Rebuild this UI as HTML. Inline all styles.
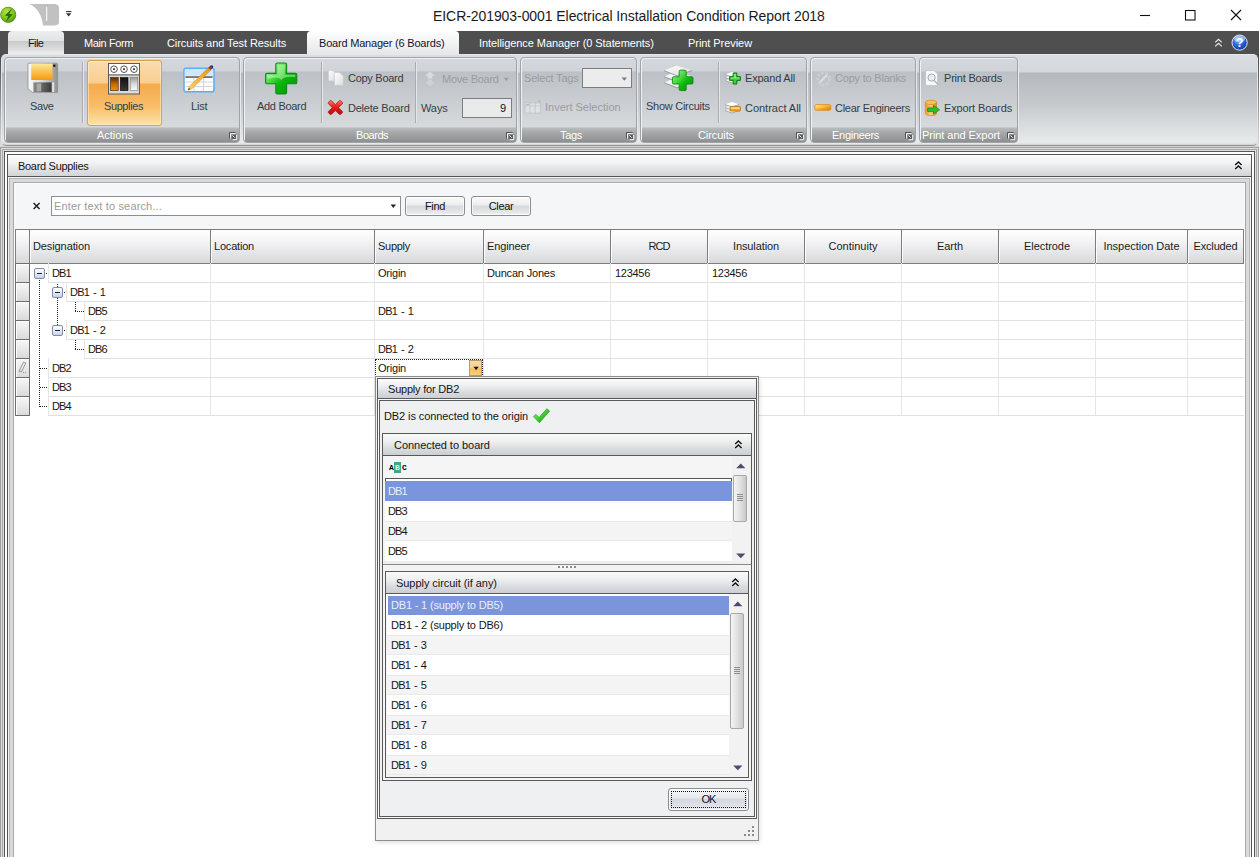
<!DOCTYPE html>
<html lang="en">
<head>
<meta charset="utf-8">
<title>EICR-201903-0001 Electrical Installation Condition Report 2018</title>
<style>
*{box-sizing:border-box;margin:0;padding:0}
html,body{width:1259px;height:857px;overflow:hidden;background:#fff}
body{font-family:"Liberation Sans",sans-serif;font-size:11px;color:#1e1e1e;position:relative}
.a{position:absolute}
.t{position:absolute;white-space:nowrap;line-height:14px;height:14px}
/* title */
#title{left:0;top:0;width:1259px;height:31px;background:#fff}
#ttext{left:433px;top:7px;font-size:14px;line-height:18px;height:18px;color:#1a1a1a;letter-spacing:-0.07px}
/* tab bar */
#tabbar{left:0;top:31px;width:1259px;height:23px;background:#4f4f4f}
.tab{position:absolute;top:5px;color:#fff;white-space:nowrap;line-height:14px}
/* ribbon */
#ribbonbg{left:0;top:54px;width:1259px;height:92px;background:linear-gradient(#45474a 0,#5e6165 20%,#8d9195 50%,#c2c6c7 85%,#dadede 100%)}
#ribbon{left:1px;top:54px;width:1257px;height:92px;border:1px solid #e4e8eb;border-bottom-color:#8e9292;border-radius:5px;box-shadow:inset 0 -2px 2px -1px rgba(60,70,70,.18);
 background:linear-gradient(#d9dce0 0,#d5d8dc 17px,#b4b9c0 18px,#c6cacd 50px,#e9eded 90px)}
.grp{position:absolute;top:57px;height:86px;border:1px solid #9fa4aa;border-radius:4px;
 background:linear-gradient(#d4d7db 0,#d0d3d8 13px,#bcc1c7 14px,#c8ccd0 40px,#d7dadc 68.5px,#b6b9b9 70.5px,#a5a7a8 75px,#8d8f90 84px);
 box-shadow:inset 1px 1px 0 #eef1f4,1px 1px 0 #e6e9ec}
.cap{position:absolute;top:128px;color:#fff;white-space:nowrap;line-height:14px;text-align:center}
.sep{position:absolute;top:62px;height:61px;width:2px;border-left:1px solid #a9adb2;border-right:1px solid #e4e6e8}
.rt{position:absolute;white-space:nowrap;line-height:14px;color:#353c45}
.dis{color:#9a9da1}
.dl{position:absolute;top:132px;width:9px;height:9px}

/* panel */
#pbg{left:0;top:146px;width:1259px;height:711px;background:#d2d6d6}
#outer{left:4px;top:151px;width:1251px;height:720px;border:1px solid #565656;background:#fff}
#grpb{left:7px;top:154px;width:1245px;height:720px;border:1px solid #565656;background:#f2f2f2}
#mid{left:9px;top:178px;width:1241px;height:720px;border:1px solid #b8b8b8;background:#d7d9db}
#pcap{left:8px;top:155px;width:1243px;height:22px;border-bottom:1px solid #565656;background:linear-gradient(#fefefe 0,#f1f2f3 8px,#dfe1e3 15px,#d2d5d8 21px)}
#inner{left:13px;top:182px;width:1233px;height:700px;border:1px solid #a9a9a9;background:#f4f6f8;box-shadow:inset 1px 1px 0 #fcfcfc}
.btn{position:absolute;height:20px;border:1px solid #8b8d90;border-radius:3px;text-align:center;line-height:18px;color:#111;
 background:linear-gradient(#fbfbfb 0,#ececed 8px,#d6d9dc 9px,#e4e6e8 15px,#f0f1f2 18px);box-shadow:inset 0 0 0 1px rgba(255,255,255,.7)}
/* grid */
#grid{left:14px;top:229px;width:1231px;height:640px;background:#fff}
#ghead{left:15px;top:229px;width:1229px;height:35px;background:linear-gradient(#ffffff 0,#f3f3f4 12px,#e3e4e6 24px,#d6d8da 33px);border:1px solid #7d7d7d}
.hc{position:absolute;top:230px;height:33px;border-left:1px solid #7d7d7d;box-shadow:inset 1px 0 0 #fbfbfb;line-height:32px;white-space:nowrap;color:#1c1c1c}
.hl{padding-left:3px}
.hcn{text-align:center}
.ind{position:absolute;left:15px;width:15px;height:20px;border:1px solid #6e6e6e;background:linear-gradient(#f7f7f7,#e9e9ea 50%,#d9dadc);box-shadow:inset 1px 1px 0 #fdfdfd}
.row{position:absolute;height:1px;background:#e0e0e0}
.vl{position:absolute;width:1px;background:#e6e6e6}
.ct{position:absolute;white-space:nowrap;line-height:14px;color:#151515}
.exp{position:absolute;width:11px;height:11px;border:1px solid #7f8ba8;border-radius:2px;background:linear-gradient(#ffffff,#dfe6f4 60%,#c6d2ea)}
.exp:after{content:"";position:absolute;left:2px;top:4px;width:5px;height:1px;background:#222}
.dv{position:absolute;width:1px;background-image:linear-gradient(#222 50%,transparent 50%);background-size:1px 2px}
.dh{position:absolute;height:1px;background-image:linear-gradient(90deg,#222 50%,transparent 50%);background-size:2px 1px}

/* popup */
#pop{left:375px;top:376px;width:384px;height:465px;border:1px solid #8e8e8e;background:#f1f1f2;box-shadow:1px 2px 4px rgba(0,0,0,.12)}
.gcap{position:absolute;background:linear-gradient(#fbfbfb 0,#eeeff0 35%,#d9dcdf 70%,#cbced2 100%)}
.dk{border:1px solid #595959}
.lr{position:absolute;height:20px}
.sel{background:#7a95dc}
.thumb{position:absolute;width:14px;border:1px solid #a8a8a8;border-radius:2px;background:linear-gradient(90deg,#f4f4f4 0,#e2e2e2 50%,#c9c9c9 100%)}
</style>
</head>
<body>
<!-- ===== title bar ===== -->
<div id="title" class="a"></div>
<div id="ttext" class="t">EICR-201903-0001 Electrical Installation Condition Report 2018</div>
<!-- app icon -->
<svg class="a" style="left:0;top:6px" width="18" height="18" viewBox="0 0 18 18">
<defs><radialGradient id="gi" cx="0.4" cy="0.3" r="0.8"><stop offset="0" stop-color="#b6e23a"/><stop offset="0.6" stop-color="#7cc11a"/><stop offset="1" stop-color="#3f8a12"/></radialGradient></defs>
<circle cx="8.2" cy="8.8" r="7.6" fill="url(#gi)" stroke="#4d8a1c" stroke-width="0.8"/>
<path d="M12.4 2 L5 9.6 L8.2 10.2 L6 15.8 L12.6 8.4 L9.2 7.8 Z" fill="#2d6a12"/>
</svg>
<!-- quick access shape -->
<svg class="a" style="left:28px;top:3px" width="33" height="24" viewBox="0 0 33 24">
<path d="M1 1 L27 1 Q31 1.4 31 5 L31 19 Q31 22 27 22.5 L15 22.5 C14 12 9 4 1 1 Z" fill="#c1c1c1"/>
<rect x="18" y="4" width="1.3" height="14" fill="#f2f2f2"/>
</svg>
<svg class="a" style="left:65px;top:10px" width="8" height="8" viewBox="0 0 8 8"><rect x="1" y="1" width="5.4" height="1.1" fill="#333"/><path d="M1 3.2 L6.4 3.2 L3.7 6.6 Z" fill="#333"/></svg>
<!-- window buttons -->
<svg class="a" style="left:1135px;top:5px" width="115" height="20" viewBox="0 0 115 20" fill="none" stroke="#111" stroke-width="1.1">
<path d="M5 10.5 H15"/><rect x="50.5" y="5.5" width="9.5" height="9.5"/><path d="M96 5 L106 15 M106 5 L96 15"/></svg>

<!-- ===== tab bar ===== -->
<div id="tabbar" class="a">
<div class="a" style="left:8px;top:0;width:56px;height:23px;border-radius:4px 4px 0 0;background:linear-gradient(#eceef0 0,#e1e3e5 10px,#c9cacb 10.5px,#dcdcdc 18px,#ededed 23px)"></div>
<div class="tab" style="left:28px;color:#15152e;letter-spacing:-0.6px">File</div>
<div class="tab" style="left:84px;letter-spacing:-0.4px">Main Form</div>
<div class="tab" style="left:167px;letter-spacing:-0.07px">Circuits and Test Results</div>
<div class="a" style="left:307px;top:0;width:152px;height:23px;border-radius:4px 4px 0 0;background:linear-gradient(#fefefe 0,#f2f3f4 12px,#e4e6e9 23px)"></div>
<div class="tab" style="left:319px;color:#15152e;letter-spacing:-0.2px">Board Manager (6 Boards)</div>
<div class="tab" style="left:479px;letter-spacing:-0.07px">Intelligence Manager (0 Statements)</div>
<div class="tab" style="left:688px;letter-spacing:-0.06px">Print Preview</div>
<svg class="a" style="left:1213px;top:6px" width="12" height="12" viewBox="0 0 12 12" fill="none" stroke="#ececec" stroke-width="1.2"><path d="M2.2 5.4 L5.5 2.4 L8.8 5.4 M2.2 9.4 L5.5 6.4 L8.8 9.4"/></svg>
<svg class="a" style="left:1231px;top:3px" width="18" height="18" viewBox="0 0 18 18">
<defs><radialGradient id="hg" cx="0.4" cy="0.3" r="0.8"><stop offset="0" stop-color="#7fb0f5"/><stop offset="0.55" stop-color="#1f5fd0"/><stop offset="1" stop-color="#0a2f8a"/></radialGradient></defs>
<circle cx="8.6" cy="8.6" r="7.6" fill="url(#hg)" stroke="#dfe6f2" stroke-width="1"/>
<ellipse cx="8.6" cy="5" rx="5.6" ry="3.4" fill="#ffffff" opacity="0.45"/>
<text x="8.7" y="13" font-family="Liberation Sans, sans-serif" font-weight="bold" font-size="12" fill="#fff" text-anchor="middle">?</text></svg>

</div>
<!-- ===== ribbon ===== -->
<div id="ribbonbg" class="a"></div>
<div id="ribbon" class="a"></div>
<div class="grp" style="left:4px;width:236px"></div>
<div class="grp" style="left:243px;width:274px"></div>
<div class="grp" style="left:520px;width:117px"></div>
<div class="grp" style="left:640px;width:167px"></div>
<div class="grp" style="left:810px;width:106px"></div>
<div class="grp" style="left:919px;width:99px"></div>
<div class="cap" style="left:97px;letter-spacing:-0.01px">Actions</div>
<div class="cap" style="left:356px;letter-spacing:-0.45px">Boards</div>
<div class="cap" style="left:560px;letter-spacing:-0.3px">Tags</div>
<div class="cap" style="left:698px;letter-spacing:-0.08px">Circuits</div>
<div class="cap" style="left:832px;letter-spacing:-0.28px">Engineers</div>
<div class="cap" style="left:922px;letter-spacing:-0.05px">Print and Export</div>
<svg class="dl" style="left:229px" viewBox="0 0 9 9"><path d="M0.5 6.5 V0.5 H6.5" fill="none" stroke="#505252" stroke-width="1"/><path d="M1.5 6.5 V1.5 H6.5" fill="none" stroke="#f2f2f2" stroke-width="1"/><rect x="2.6" y="2.6" width="4.6" height="4.6" fill="#5c5e5e"/><path d="M3.4 3.4 L5.6 5.6" stroke="#f4f4f4" stroke-width="1"/><path d="M7.7 3 V7.7 H3.6" fill="none" stroke="#f6f6f6" stroke-width="1"/></svg><svg class="dl" style="left:506px" viewBox="0 0 9 9"><path d="M0.5 6.5 V0.5 H6.5" fill="none" stroke="#505252" stroke-width="1"/><path d="M1.5 6.5 V1.5 H6.5" fill="none" stroke="#f2f2f2" stroke-width="1"/><rect x="2.6" y="2.6" width="4.6" height="4.6" fill="#5c5e5e"/><path d="M3.4 3.4 L5.6 5.6" stroke="#f4f4f4" stroke-width="1"/><path d="M7.7 3 V7.7 H3.6" fill="none" stroke="#f6f6f6" stroke-width="1"/></svg><svg class="dl" style="left:626px" viewBox="0 0 9 9"><path d="M0.5 6.5 V0.5 H6.5" fill="none" stroke="#505252" stroke-width="1"/><path d="M1.5 6.5 V1.5 H6.5" fill="none" stroke="#f2f2f2" stroke-width="1"/><rect x="2.6" y="2.6" width="4.6" height="4.6" fill="#5c5e5e"/><path d="M3.4 3.4 L5.6 5.6" stroke="#f4f4f4" stroke-width="1"/><path d="M7.7 3 V7.7 H3.6" fill="none" stroke="#f6f6f6" stroke-width="1"/></svg><svg class="dl" style="left:796px" viewBox="0 0 9 9"><path d="M0.5 6.5 V0.5 H6.5" fill="none" stroke="#505252" stroke-width="1"/><path d="M1.5 6.5 V1.5 H6.5" fill="none" stroke="#f2f2f2" stroke-width="1"/><rect x="2.6" y="2.6" width="4.6" height="4.6" fill="#5c5e5e"/><path d="M3.4 3.4 L5.6 5.6" stroke="#f4f4f4" stroke-width="1"/><path d="M7.7 3 V7.7 H3.6" fill="none" stroke="#f6f6f6" stroke-width="1"/></svg><svg class="dl" style="left:905px" viewBox="0 0 9 9"><path d="M0.5 6.5 V0.5 H6.5" fill="none" stroke="#505252" stroke-width="1"/><path d="M1.5 6.5 V1.5 H6.5" fill="none" stroke="#f2f2f2" stroke-width="1"/><rect x="2.6" y="2.6" width="4.6" height="4.6" fill="#5c5e5e"/><path d="M3.4 3.4 L5.6 5.6" stroke="#f4f4f4" stroke-width="1"/><path d="M7.7 3 V7.7 H3.6" fill="none" stroke="#f6f6f6" stroke-width="1"/></svg><svg class="dl" style="left:1007px" viewBox="0 0 9 9"><path d="M0.5 6.5 V0.5 H6.5" fill="none" stroke="#505252" stroke-width="1"/><path d="M1.5 6.5 V1.5 H6.5" fill="none" stroke="#f2f2f2" stroke-width="1"/><rect x="2.6" y="2.6" width="4.6" height="4.6" fill="#5c5e5e"/><path d="M3.4 3.4 L5.6 5.6" stroke="#f4f4f4" stroke-width="1"/><path d="M7.7 3 V7.7 H3.6" fill="none" stroke="#f6f6f6" stroke-width="1"/></svg>
<div class="sep" style="left:82px"></div>
<div class="sep" style="left:321px"></div>
<div class="sep" style="left:415px"></div>
<div class="sep" style="left:718px"></div>
<!-- Supplies highlighted button -->
<div class="a" style="left:87px;top:60px;width:75px;height:66px;border:1px solid #d9a04e;border-radius:3px;background:linear-gradient(#fbdcae 0,#f9cd90 22px,#f5aa4c 23px,#f8bd68 45px,#fce3a6 64px);box-shadow:inset 0 0 0 1px rgba(255,240,200,.55)"></div>
<!-- save -->
<svg class="a" style="left:27px;top:62px" width="32" height="32" viewBox="0 0 32 32">
<defs><linearGradient id="sv1" x1="0" x2="1"><stop offset="0" stop-color="#fbfbfb"/><stop offset="0.5" stop-color="#d8d8d8"/><stop offset="1" stop-color="#8f8f8f"/></linearGradient>
<linearGradient id="sv2" x1="0" x2="0" y1="0" y2="1"><stop offset="0" stop-color="#fde9a0"/><stop offset="0.45" stop-color="#fbc555"/><stop offset="1" stop-color="#f39a14"/></linearGradient>
<linearGradient id="sv3" x1="0" x2="1"><stop offset="0" stop-color="#8a8a8a"/><stop offset="1" stop-color="#3c3c3c"/></linearGradient></defs>
<path d="M2 1.2 H29.4 Q30.6 1.2 30.6 2.4 V30.4 H5.2 L1 26.6 V2.2 Q1 1.2 2 1.2 Z" fill="url(#sv1)" stroke="#8d8d8d" stroke-width="0.8"/>
<rect x="4.2" y="1.6" width="21.2" height="16.4" fill="url(#sv2)"/>
<rect x="26.2" y="2.6" width="2.2" height="2.2" fill="#111"/>
<rect x="6.4" y="20.4" width="18.2" height="9.6" fill="url(#sv3)"/>
<rect x="9.6" y="21.4" width="4.6" height="8" fill="#a9a9a9"/>
<rect x="25.2" y="20.4" width="2" height="9.6" fill="#e4e4e4"/>
</svg>
<!-- supplies -->
<svg class="a" style="left:107px;top:62px" width="34" height="34" viewBox="0 0 34 34">
<defs><linearGradient id="sp1" x1="0" x2="0" y1="0" y2="1"><stop offset="0" stop-color="#5a2a00"/><stop offset="0.5" stop-color="#c66a06"/><stop offset="1" stop-color="#e8920c"/></linearGradient>
<linearGradient id="sp2" x1="0" x2="0" y1="0" y2="1"><stop offset="0" stop-color="#111"/><stop offset="1" stop-color="#3a3a3a"/></linearGradient>
<linearGradient id="sp3" x1="0" x2="0" y1="0" y2="1"><stop offset="0" stop-color="#9c9c9c"/><stop offset="0.5" stop-color="#dcdcdc"/><stop offset="1" stop-color="#fafafa"/></linearGradient></defs>
<rect x="1.5" y="1.5" width="31" height="30.5" fill="#dadada" stroke="#5c5c5c" stroke-width="1"/>
<rect x="2" y="2" width="30" height="10.4" fill="#fff"/>
<rect x="1.5" y="12.4" width="31" height="1" fill="#555"/>
<g fill="none" stroke="#444" stroke-width="0.9"><circle cx="7" cy="7.2" r="3.3"/><circle cx="17" cy="7.2" r="3.3"/><circle cx="27" cy="7.2" r="3.3"/></g>
<g fill="#444"><circle cx="7" cy="7.2" r="1.1"/><circle cx="17" cy="7.2" r="1.1"/><circle cx="27" cy="7.2" r="1.1"/></g>
<rect x="3.6" y="15.6" width="7.6" height="13" fill="url(#sp1)" stroke="#3a1a00" stroke-width="0.6"/>
<rect x="13.4" y="15.6" width="7.6" height="13" fill="url(#sp2)" stroke="#000" stroke-width="0.6"/>
<rect x="23.2" y="15.6" width="7.6" height="13" fill="url(#sp3)" stroke="#777" stroke-width="0.6"/>
</svg>
<!-- list -->
<svg class="a" style="left:182px;top:63px" width="34" height="32" viewBox="0 0 34 32">
<defs><linearGradient id="ls1" x1="0" x2="1" y1="1" y2="0"><stop offset="0" stop-color="#f7d774"/><stop offset="0.5" stop-color="#f4b63a"/><stop offset="1" stop-color="#e8940f"/></linearGradient></defs>
<rect x="2" y="5.4" width="30" height="23.4" rx="2" fill="#fff" stroke="#5eaef2" stroke-width="1.6"/>
<rect x="2.8" y="6.2" width="28.4" height="6.6" fill="#cfe7fb"/>
<rect x="3.4" y="13.4" width="27.2" height="1.3" fill="#3a3a3a"/>
<g stroke="#c8c8c8" stroke-width="0.8"><path d="M3.4 19 H30.6 M3.4 23.6 H30.6 M12 14.6 V28 M21.6 14.6 V28"/></g>
<path d="M6 27.2 L7.4 23.4 L26.2 4.8 L28.6 7.2 L9.8 25.8 Z" fill="url(#ls1)" stroke="#c98a1a" stroke-width="0.5"/>
<path d="M6 27.2 L6.9 24.8 L8.4 26.3 Z" fill="#5a4a30"/>
<path d="M26.2 4.8 L27.8 3.2 L30.2 5.6 L28.6 7.2 Z" fill="#c8202a"/>
<path d="M27.8 3.2 L28.6 2.4 Q29.8 1.8 30.8 2.8 Q31.6 3.8 31 4.8 L30.2 5.6 Z" fill="#27317a"/>
</svg>
<!-- add board plus -->
<svg class="a" style="left:264px;top:61px" width="35" height="35" viewBox="0 0 35 35">
<defs><linearGradient id="pl1" x1="0" x2="1" y1="0" y2="1"><stop offset="0" stop-color="#b6f7ae"/><stop offset="0.35" stop-color="#4fdc4a"/><stop offset="0.55" stop-color="#0cb80c"/><stop offset="1" stop-color="#058a08"/></linearGradient></defs>
<path d="M13.2 2 H21.2 Q22.6 2 22.6 3.4 V12.4 H31.4 Q32.8 12.4 32.8 13.8 V21.4 Q32.8 22.8 31.4 22.8 H22.6 V31.6 Q22.6 33 21.2 33 H13.2 Q11.8 33 11.8 31.6 V22.8 H3 Q1.6 22.8 1.6 21.4 V13.8 Q1.6 12.4 3 12.4 H11.8 V3.4 Q11.8 2 13.2 2 Z" fill="url(#pl1)" stroke="#0f8a14" stroke-width="1.1"/>
<path d="M13.4 3.4 H20.8 V13.8 H31.2 V16 Q20 15 17.4 19 Q14.4 14.4 3.2 18 V13.8 H13.4 Z" fill="#d8ffd2" opacity="0.45"/>
</svg>

<div class="rt" style="left:30px;top:99px;letter-spacing:-0.39px">Save</div>
<div class="rt" style="left:104px;top:99px;letter-spacing:-0.4px">Supplies</div>
<div class="rt" style="left:191px;top:99px;letter-spacing:-0.16px">List</div>
<div class="rt" style="left:257px;top:99px;letter-spacing:-0.31px">Add Board</div>
<div class="rt" style="left:348px;top:71px;letter-spacing:-0.28px">Copy Board</div>
<div class="rt" style="left:348px;top:101px;letter-spacing:-0.22px">Delete Board</div>
<div class="rt dis" style="left:442px;top:72px;letter-spacing:-0.26px">Move Board</div>
<svg class="a" style="left:503px;top:77px" width="7" height="5" viewBox="0 0 7 5"><path d="M0.6 0.8 L6 0.8 L3.3 4 Z" fill="#9a9fa5"/></svg>
<div class="rt" style="left:421px;top:101px;letter-spacing:-0.1px;color:#36414c">Ways</div>
<div class="a" style="left:462px;top:98px;width:50px;height:20px;border:1px solid #7b7d80;background:#e9eaeb"></div>
<div class="rt" style="left:500px;top:101px;color:#111">9</div>
<div class="rt dis" style="left:524px;top:71px;letter-spacing:-0.19px">Select Tags</div>
<div class="a" style="left:582px;top:68px;width:50px;height:20px;border:1px solid #7b7d80;background:#ececed"></div>
<svg class="a" style="left:621px;top:77px" width="7" height="5" viewBox="0 0 7 5"><path d="M0.6 0.6 L6 0.6 L3.3 3.8 Z" fill="#77797c"/></svg>
<div class="rt dis" style="left:545px;top:100px;letter-spacing:-0.01px">Invert Selection</div>
<div class="rt" style="left:646px;top:99px;letter-spacing:-0.27px">Show Circuits</div>
<div class="rt" style="left:745px;top:71px;letter-spacing:-0.2px">Expand All</div>
<div class="rt" style="left:745px;top:101px;letter-spacing:-0.02px">Contract All</div>
<div class="rt dis" style="left:835px;top:71px;letter-spacing:-0.21px">Copy to Blanks</div>
<div class="rt" style="left:835px;top:101px;letter-spacing:-0.26px">Clear Engineers</div>
<div class="rt" style="left:944px;top:71px;letter-spacing:-0.21px">Print Boards</div>
<div class="rt" style="left:944px;top:101px;letter-spacing:-0.13px">Export Boards</div>
<!-- copy -->
<svg class="a" style="left:327px;top:69px" width="18" height="18" viewBox="0 0 18 18">
<defs><linearGradient id="pg" x1="0" x2="1" y1="0" y2="1"><stop offset="0" stop-color="#ffffff"/><stop offset="1" stop-color="#dcdcdc"/></linearGradient></defs>
<path d="M1.6 1.4 H6 L8.2 3.6 V12 H1.6 Z" fill="url(#pg)" stroke="#c9cbce" stroke-width="0.6"/>
<path d="M7.4 3.6 H12.8 L16.4 7.2 V16.4 H7.4 Z" fill="url(#pg)" stroke="#c2c4c8" stroke-width="0.6"/>
</svg>
<!-- delete -->
<svg class="a" style="left:327px;top:99px" width="18" height="18" viewBox="0 0 18 18">
<defs><linearGradient id="dx" x1="0" x2="0" y1="0" y2="1"><stop offset="0" stop-color="#ff7a6a"/><stop offset="0.45" stop-color="#ea1c1c"/><stop offset="1" stop-color="#b80c0c"/></linearGradient></defs>
<path d="M4.2 1.6 L8.4 5.6 L12.4 1.6 Q13.2 1.2 13.8 1.8 L15.4 3.6 Q15.8 4.4 15.2 5 L11.4 8.6 L15.2 12.2 Q15.8 12.8 15.4 13.6 L13.8 15.2 Q13.2 15.8 12.4 15.4 L8.4 11.6 L4.2 15.4 Q3.4 15.8 2.8 15.2 L1.4 13.6 Q1 12.8 1.6 12.2 L5.4 8.6 L1.6 5 Q1 4.4 1.4 3.6 L2.8 1.8 Q3.4 1.2 4.2 1.6 Z" fill="url(#dx)" stroke="#a41010" stroke-width="0.7"/>
</svg>
<!-- move (disabled) -->
<svg class="a" style="left:422px;top:70px" width="16" height="18" viewBox="0 0 16 18" opacity="0.75">
<path d="M8 1 L13.4 6 H10.6 V9 H5.4 V6 H2.6 Z" fill="#e2e4e6" stroke="#c3c6ca" stroke-width="0.6"/>
<path d="M8 17 L13.4 12 H10.6 V9 H5.4 V12 H2.6 Z" fill="#d4d6d9" stroke="#bfc2c6" stroke-width="0.6"/>
</svg>
<!-- invert (disabled) -->
<svg class="a" style="left:524px;top:100px" width="18" height="14" viewBox="0 0 18 14" opacity="0.8">
<rect x="1" y="3" width="15.4" height="10" fill="#e3e5e7" stroke="#b9bcc0" stroke-width="0.7"/>
<path d="M1 6 H16.4 M6 3 V13 M11.2 3 V13" stroke="#b9bcc0" stroke-width="0.7"/>
<path d="M14 0.6 H16 V3" stroke="#a9acb0" stroke-width="0.8" fill="none"/>
<rect x="2.4" y="4" width="2.6" height="1.2" fill="#a9acb0"/>
</svg>
<!-- show circuits -->
<svg class="a" style="left:661px;top:62px" width="36" height="32" viewBox="0 0 36 32">
<defs><linearGradient id="ly" x1="0" x2="1" y1="0" y2="1"><stop offset="0" stop-color="#ffffff"/><stop offset="1" stop-color="#dcdcdc"/></linearGradient>
<linearGradient id="pl2" x1="0" x2="1" y1="0" y2="1"><stop offset="0" stop-color="#b6f7ae"/><stop offset="0.4" stop-color="#3fd83c"/><stop offset="0.6" stop-color="#0cb80c"/><stop offset="1" stop-color="#058a08"/></linearGradient></defs>
<path d="M3 20.6 L16 15.6 L31 20.6 L16 25.8 Z" fill="url(#ly)"/><path d="M3 20.6 L16 25.8 L31 20.6" fill="none" stroke="#8c8c8c" stroke-width="0.8"/>
<path d="M3 14.6 L16 9.6 L31 14.6 L16 19.8 Z" fill="url(#ly)"/><path d="M3 14.6 L16 19.8 L31 14.6" fill="none" stroke="#8c8c8c" stroke-width="0.8"/>
<path d="M3 8.6 L16 3.6 L31 8.6 L16 13.8 Z" fill="url(#ly)"/><path d="M3 8.6 L16 13.8 L31 8.6" fill="none" stroke="#8c8c8c" stroke-width="0.8"/>
<path d="M19.4 8.2 H24 Q25.2 8.2 25.2 9.4 V14.8 H30.8 Q32 14.8 32 16 V20.8 Q32 22 30.8 22 H25.2 V27.4 Q25.2 28.6 24 28.6 H19.4 Q18.2 28.6 18.2 27.4 V22 H12.6 Q11.4 22 11.4 20.8 V16 Q11.4 14.8 12.6 14.8 H18.2 V9.4 Q18.2 8.2 19.4 8.2 Z" fill="url(#pl2)" stroke="#0f8a14" stroke-width="0.9"/>
</svg>
<!-- expand all -->
<svg class="a" style="left:723px;top:70px" width="20" height="16" viewBox="0 0 20 16">
<path d="M2 10.5 L9 8 L16 10.5 L9 13 Z" fill="#fafafa"/><path d="M2 10.5 L9 13 L16 10.5" fill="none" stroke="#8e8e8e" stroke-width="0.7"/>
<path d="M2 7.5 L9 5 L16 7.5 L9 10 Z" fill="#fafafa"/><path d="M2 7.5 L9 10 L16 7.5" fill="none" stroke="#8e8e8e" stroke-width="0.7"/>
<path d="M2 4.5 L9 2 L16 4.5 L9 7 Z" fill="#ffffff"/><path d="M2 4.5 L9 7 L16 4.5" fill="none" stroke="#8e8e8e" stroke-width="0.7"/>
<path d="M10.2 3 H13.8 V6.6 H17.4 V10.4 H13.8 V14 H10.2 V10.4 H6.6 V6.6 H10.2 Z" fill="#35d232" stroke="#0c7a12" stroke-width="1"/>
<path d="M11.2 4 H12.8 V7.6 H16.4 V8.4 H7.6 V7.6 H11.2 Z" fill="#a9f5a0" opacity="0.8"/>
</svg>
<!-- contract all -->
<svg class="a" style="left:723px;top:100px" width="20" height="16" viewBox="0 0 20 16">
<path d="M2 10.5 L9 8 L16 10.5 L9 13 Z" fill="#fafafa"/><path d="M2 10.5 L9 13 L16 10.5" fill="none" stroke="#8e8e8e" stroke-width="0.7"/>
<path d="M2 7.5 L9 5 L16 7.5 L9 10 Z" fill="#fafafa"/><path d="M2 7.5 L9 10 L16 7.5" fill="none" stroke="#8e8e8e" stroke-width="0.7"/>
<path d="M2 4.5 L9 2 L16 4.5 L9 7 Z" fill="#ffffff"/><path d="M2 4.5 L9 7 L16 4.5" fill="none" stroke="#8e8e8e" stroke-width="0.7"/>
<rect x="7" y="6.4" width="10.4" height="4.6" rx="0.6" fill="#f5a623" stroke="#b9700f" stroke-width="0.8"/>
<rect x="7.8" y="7.4" width="8.8" height="1.4" fill="#ffe28a"/>
</svg>
<!-- copy to blanks (disabled) -->
<svg class="a" style="left:815px;top:70px" width="18" height="18" viewBox="0 0 18 18" opacity="0.8">
<circle cx="8.6" cy="8.8" r="6" fill="none" stroke="#dfe1e3" stroke-width="2.2" stroke-dasharray="2.6 1.6"/>
<circle cx="8.6" cy="8.8" r="6" fill="none" stroke="#b4b7bb" stroke-width="0.7" stroke-dasharray="2.6 1.6"/>
<path d="M5 12.4 L12 5" stroke="#e6e7e9" stroke-width="2"/>
</svg>
<!-- clear engineers -->
<svg class="a" style="left:814px;top:103px" width="18" height="9" viewBox="0 0 18 9">
<defs><linearGradient id="ob" x1="0" x2="1" y1="0" y2="1"><stop offset="0" stop-color="#fff09a"/><stop offset="0.5" stop-color="#fbb62e"/><stop offset="1" stop-color="#e6730a"/></linearGradient></defs>
<rect x="0.8" y="1.6" width="16" height="5.6" rx="1.4" fill="url(#ob)" stroke="#d8861a" stroke-width="0.8"/>
</svg>
<!-- print boards -->
<svg class="a" style="left:924px;top:69px" width="18" height="18" viewBox="0 0 18 18">
<path d="M1.6 1.6 H10 L13.6 5 V16.4 H1.6 Z" fill="#fafafa" stroke="#b9bcc2" stroke-width="0.7"/>
<circle cx="7.6" cy="8.6" r="3.6" fill="#e9eef8" stroke="#a2a7b2" stroke-width="1"/>
<path d="M10.2 11.4 L14 15.6" stroke="#b0b4bc" stroke-width="1.5"/>
</svg>
<!-- export boards -->
<svg class="a" style="left:924px;top:99px" width="18" height="18" viewBox="0 0 18 18">
<defs><linearGradient id="cy" x1="0" x2="1"><stop offset="0" stop-color="#f4a02a"/><stop offset="0.5" stop-color="#fbd27a"/><stop offset="1" stop-color="#e8860f"/></linearGradient></defs>
<path d="M1.4 3.4 V14 Q1.4 16.6 7 16.6 Q12.6 16.6 12.6 14 V3.4 Z" fill="url(#cy)" stroke="#d37a10" stroke-width="0.6"/>
<ellipse cx="7" cy="3.4" rx="5.6" ry="2.2" fill="#fbc050" stroke="#d37a10" stroke-width="0.6"/>
<path d="M1.4 7 Q7 9.6 12.6 7 M1.4 10.6 Q7 13.2 12.6 10.6" fill="none" stroke="#d98a1c" stroke-width="0.6"/>
<path d="M3.6 9 H9.6 V6.4 L15.6 10.8 L9.6 15 V12.6 H3.6 Z" fill="#2fbf2a" stroke="#13801a" stroke-width="0.7"/>
</svg>


<div id="pbg" class="a"></div>
<div class="a" style="left:0;top:147px;width:1259px;height:720px;border:1px solid #9e9e9e"></div>
<div class="a" style="left:1px;top:148px;width:1257px;height:720px;border:1px solid #dfdfdf"></div>
<div class="a" style="left:2px;top:149px;width:1255px;height:720px;border:1px solid #a6a6a6"></div>
<div class="a" style="left:3px;top:150px;width:1253px;height:720px;border:1px solid #dedede"></div>
<div id="outer" class="a"></div>
<div id="grpb" class="a"></div>
<div id="pcap" class="a"></div>
<div class="ct" style="left:18px;top:159px;letter-spacing:-0.3px">Board Supplies</div>
<svg class="a" style="left:1233px;top:160px" width="11" height="11" viewBox="0 0 11 11" fill="none" stroke="#111" stroke-width="1.4"><path d="M2.2 5 L5.4 2 L8.6 5 M2.2 9 L5.4 6 L8.6 9"/></svg>
<div id="mid" class="a"></div>
<div id="inner" class="a"></div>
<!-- search -->
<svg class="a" style="left:32px;top:201px" width="10" height="10" viewBox="0 0 10 10"><path d="M1.6 2 L7.6 8 M7.6 2 L1.6 8" stroke="#222" stroke-width="1.5"/></svg>
<div class="a" style="left:51px;top:196px;width:350px;height:20px;border:1px solid #8d8f92;background:#fff"></div>
<div class="ct" style="left:54px;top:199px;color:#9b9b9b;letter-spacing:0.15px">Enter text to search...</div>
<svg class="a" style="left:390px;top:204px" width="7" height="5" viewBox="0 0 7 5"><path d="M0.6 0.6 L6 0.6 L3.3 3.9 Z" fill="#222"/></svg>
<div class="btn" style="left:405px;top:196px;width:60px;letter-spacing:-0.35px">Find</div>
<div class="btn" style="left:471px;top:196px;width:60px;letter-spacing:-0.36px">Clear</div>
<!-- grid -->
<div id="grid" class="a"></div>
<div id="ghead" class="a"></div>
<div class="hc hl" style="left:29px;width:181px;letter-spacing:-0.1px">Designation</div>
<div class="hc hl" style="left:210px;width:164px;letter-spacing:-0.2px">Location</div>
<div class="hc hl" style="left:374px;width:109px;letter-spacing:-0.27px">Supply</div>
<div class="hc hl" style="left:483px;width:127px;letter-spacing:-0.13px">Engineer</div>
<div class="hc hcn" style="left:610px;width:97px;letter-spacing:-0.9px">RCD</div>
<div class="hc hcn" style="left:707px;width:97px;letter-spacing:-0.11px">Insulation</div>
<div class="hc hcn" style="left:804px;width:97px;letter-spacing:0px">Continuity</div>
<div class="hc hcn" style="left:901px;width:97px;letter-spacing:-0.06px">Earth</div>
<div class="hc hcn" style="left:998px;width:97px;letter-spacing:-0.05px">Electrode</div>
<div class="hc hcn" style="left:1095px;width:92px;letter-spacing:-0.03px">Inspection Date</div>
<div class="hc hcn" style="left:1187px;width:56px;letter-spacing:-0.16px">Excluded</div>
<div class="ind" style="top:263px"></div>
<div class="ind" style="top:282px"></div>
<div class="ind" style="top:301px"></div>
<div class="ind" style="top:320px"></div>
<div class="ind" style="top:339px"></div>
<div class="ind" style="top:358px"></div>
<div class="ind" style="top:377px"></div>
<div class="ind" style="top:396px"></div>
<div class="row" style="left:48px;top:282px;width:1196px"></div>
<div class="vl" style="left:48px;top:263px;height:19px"></div>
<div class="row" style="left:66px;top:301px;width:1178px"></div>
<div class="vl" style="left:66px;top:282px;height:19px"></div>
<div class="row" style="left:84px;top:320px;width:1160px"></div>
<div class="vl" style="left:84px;top:301px;height:19px"></div>
<div class="row" style="left:66px;top:339px;width:1178px"></div>
<div class="vl" style="left:66px;top:320px;height:19px"></div>
<div class="row" style="left:84px;top:358px;width:1160px"></div>
<div class="vl" style="left:84px;top:339px;height:19px"></div>
<div class="row" style="left:48px;top:377px;width:1196px"></div>
<div class="vl" style="left:48px;top:358px;height:19px"></div>
<div class="row" style="left:48px;top:396px;width:1196px"></div>
<div class="vl" style="left:48px;top:377px;height:19px"></div>
<div class="row" style="left:48px;top:415px;width:1196px"></div>
<div class="vl" style="left:48px;top:396px;height:19px"></div>
<div class="vl" style="left:210px;top:263px;height:152px"></div>
<div class="vl" style="left:374px;top:263px;height:152px"></div>
<div class="vl" style="left:483px;top:263px;height:152px"></div>
<div class="vl" style="left:610px;top:263px;height:152px"></div>
<div class="vl" style="left:707px;top:263px;height:152px"></div>
<div class="vl" style="left:804px;top:263px;height:152px"></div>
<div class="vl" style="left:901px;top:263px;height:152px"></div>
<div class="vl" style="left:998px;top:263px;height:152px"></div>
<div class="vl" style="left:1095px;top:263px;height:152px"></div>
<div class="vl" style="left:1187px;top:263px;height:152px"></div>

<div class="ct" style="left:52px;top:266px;letter-spacing:-0.95px">DB1</div>
<div class="ct" style="left:70px;top:285px;letter-spacing:-0.8px;word-spacing:1.7px">DB1 - 1</div>
<div class="ct" style="left:88px;top:304px;letter-spacing:-0.95px">DB5</div>
<div class="ct" style="left:70px;top:323px;letter-spacing:-0.8px;word-spacing:1.7px">DB1 - 2</div>
<div class="ct" style="left:88px;top:342px;letter-spacing:-0.95px">DB6</div>
<div class="ct" style="left:52px;top:361px;letter-spacing:-0.95px">DB2</div>
<div class="ct" style="left:52px;top:380px;letter-spacing:-0.95px">DB3</div>
<div class="ct" style="left:52px;top:399px;letter-spacing:-0.95px">DB4</div>
<div class="ct" style="left:378px;top:266px;letter-spacing:-0.22px">Origin</div>
<div class="ct" style="left:487px;top:266px;letter-spacing:-0.19px">Duncan Jones</div>
<div class="ct" style="left:615px;top:266px;letter-spacing:-0.29px">123456</div>
<div class="ct" style="left:712px;top:266px;letter-spacing:-0.29px">123456</div>
<div class="ct" style="left:378px;top:304px;letter-spacing:-0.8px;word-spacing:1.7px">DB1 - 1</div>
<div class="ct" style="left:378px;top:342px;letter-spacing:-0.8px;word-spacing:1.7px">DB1 - 2</div>
<div class="exp" style="left:34px;top:268px"></div>
<div class="exp" style="left:52px;top:287px"></div>
<div class="exp" style="left:52px;top:325px"></div>
<div class="dh" style="left:46px;top:273px;width:1px"></div>
<div class="dv" style="left:39px;top:280px;height:127px"></div>
<div class="dh" style="left:40px;top:368px;width:8px"></div>
<div class="dh" style="left:40px;top:387px;width:8px"></div>
<div class="dh" style="left:40px;top:406px;width:8px"></div>
<div class="dv" style="left:57px;top:284px;height:3px"></div>
<div class="dv" style="left:57px;top:298px;height:27px"></div>
<div class="dh" style="left:64px;top:292px;width:2px"></div>
<div class="dh" style="left:64px;top:330px;width:2px"></div>
<div class="dv" style="left:75px;top:302px;height:9px"></div>
<div class="dh" style="left:75px;top:311px;width:9px"></div>
<div class="dv" style="left:75px;top:340px;height:9px"></div>
<div class="dh" style="left:75px;top:349px;width:9px"></div>
<div class="a" style="left:375px;top:359px;width:108px;height:18px;background:#fff;outline:1px dotted #223;outline-offset:-1px"></div>
<div class="ct" style="left:378px;top:361px;letter-spacing:-0.22px">Origin</div>
<div class="a" style="left:469px;top:360px;width:13px;height:16px;border:1px solid #bf9a5c;background:linear-gradient(#f3dcb2 0,#f6cf8b 7px,#f7bd5c 8px,#fbd27c 15px)"></div>
<svg class="a" style="left:473px;top:366px" width="7" height="5" viewBox="0 0 7 5"><path d="M0.4 0.8 L5.8 0.8 L3.1 4 Z" fill="#111"/></svg>
<svg class="a" style="left:17px;top:361px" width="11" height="13" viewBox="0 0 11 13" fill="none" stroke="#8f8f8f" stroke-width="0.9"><path d="M6.6 1 L8.8 2 L4.6 10.6 L2.2 10.6 L2.6 9 Z"/><path d="M6 11.4 H9.6" stroke-dasharray="1 1"/></svg>


<div id="pop" class="a"></div>
<div class="a dk" style="left:377px;top:378px;width:380px;height:441px;background:#fbfbfb"></div>
<div class="gcap" style="left:378px;top:379px;width:378px;height:19px"></div>
<div class="a" style="left:378px;top:398px;width:378px;height:1px;background:#595959"></div>
<div class="ct" style="left:388px;top:382px;letter-spacing:-0.21px">Supply for DB2</div>
<div class="a dk" style="left:379px;top:400px;width:376px;height:417px;background:#eff0f1"></div>
<div class="ct" style="left:384px;top:409px;letter-spacing:-0.09px">DB2 is connected to the origin</div>
<svg class="a" style="left:532px;top:407px" width="19" height="18" viewBox="0 0 19 18">
<defs><linearGradient id="ck" x1="0" x2="1" y1="0" y2="1"><stop offset="0" stop-color="#b8f59a"/><stop offset="0.5" stop-color="#3fcf2f"/><stop offset="1" stop-color="#128a12"/></linearGradient></defs>
<path d="M1.4 9.6 L4 7.4 L7 10.6 L14.8 1.8 L17.6 4 L7.4 15.8 Z" fill="url(#ck)" stroke="#2a9a22" stroke-width="0.7"/></svg>
<!-- panel with both groups -->
<div class="a dk" style="left:382px;top:433px;width:370px;height:348px;background:#f4f4f5"></div>
<div class="gcap" style="left:383px;top:434px;width:368px;height:21px"></div>
<div class="a" style="left:383px;top:455px;width:368px;height:1px;background:#595959"></div>
<div class="ct" style="left:394px;top:438px;letter-spacing:-0.04px">Connected to board</div>
<svg class="a" style="left:733px;top:439px" width="11" height="11" viewBox="0 0 11 11" fill="none" stroke="#111" stroke-width="1.4"><path d="M2.2 5 L5.4 2 L8.6 5 M2.2 9 L5.4 6 L8.6 9"/></svg>

<!-- filter row -->
<div class="a" style="left:383px;top:456px;width:349px;height:22px;background:#f5f5f6"></div>
<div class="a" style="left:389px;top:462px;width:17px;height:11px;font:bold 8px/11px 'Liberation Mono',monospace;color:#000;letter-spacing:0"><span class="a" style="left:0;top:0">A</span><span class="a" style="left:5px;top:0;width:7px;height:11px;background:#3fa888;color:#d9f2ea;text-align:center">B</span><span class="a" style="left:13px;top:0">C</span></div>
<div class="a" style="left:385px;top:478px;width:347px;height:4px;background:#fff;border-top:1px solid #555;border-left:1px solid #555"></div>
<div class="a" style="left:731px;top:478px;width:1px;height:3px;background:#555"></div>
<!-- list 1 -->
<div class="lr sel" style="left:385px;top:481px;width:347px"></div>
<div class="lr" style="left:385px;top:501px;width:347px;background:#fff"></div>
<div class="lr" style="left:385px;top:521px;width:347px;background:#f4f4f4;border-top:1px solid #e9e9e9;border-bottom:1px solid #e9e9e9"></div>
<div class="lr" style="left:385px;top:541px;width:347px;background:#fff"></div>
<div class="a" style="left:383px;top:561px;width:368px;height:3px;background:#eeeeef"></div>
<div class="ct" style="left:388px;top:484px;letter-spacing:-0.95px;color:#e9effc">DB1</div>
<div class="ct" style="left:388px;top:504px;letter-spacing:-0.95px">DB3</div>
<div class="ct" style="left:388px;top:524px;letter-spacing:-0.95px">DB4</div>
<div class="ct" style="left:388px;top:544px;letter-spacing:-0.95px">DB5</div>
<!-- scrollbar 1 -->
<div class="a" style="left:732px;top:456px;width:19px;height:106px;background:#f2f2f3"></div>
<svg class="a" style="left:736px;top:463px" width="10" height="6" viewBox="0 0 10 6"><path d="M0.2 5.2 L9.4 5.2 L4.8 0.4 Z" fill="#4b4d70"/></svg>
<svg class="a" style="left:736px;top:553px" width="10" height="6" viewBox="0 0 10 6"><path d="M0.2 0.4 L9.4 0.4 L4.8 5.2 Z" fill="#4b4d70"/></svg>

<div class="thumb" style="left:733px;top:475px;height:47px"></div>
<div class="a" style="left:737px;top:494px;width:6px;height:7px;background:repeating-linear-gradient(#8c8c8c 0,#8c8c8c 1px,transparent 1px,transparent 2px)"></div>

<div class="a" style="left:383px;top:564px;width:368px;height:1px;background:#8a8a8a"></div>
<!-- splitter -->
<div class="a" style="left:383px;top:565px;width:368px;height:5px;background:#f3f3f4"></div>
<div class="a" style="left:558px;top:566px;width:18px;height:2px;background:repeating-linear-gradient(90deg,#8a8a8a 0,#8a8a8a 2px,transparent 2px,transparent 4px)"></div>
<!-- supply circuit group -->
<div class="a dk" style="left:385px;top:571px;width:364px;height:207px;background:#f4f4f5"></div>
<div class="gcap" style="left:386px;top:572px;width:362px;height:21px"></div>
<div class="a" style="left:386px;top:593px;width:362px;height:1px;background:#595959"></div>
<div class="ct" style="left:396px;top:576px;letter-spacing:-0.05px">Supply circuit (if any)</div>
<svg class="a" style="left:730px;top:577px" width="11" height="11" viewBox="0 0 11 11" fill="none" stroke="#111" stroke-width="1.4"><path d="M2.2 5 L5.4 2 L8.6 5 M2.2 9 L5.4 6 L8.6 9"/></svg>
<div class="lr sel" style="left:388px;top:596px;width:341px;height:19px"></div>
<div class="ct" style="left:391px;top:598px;letter-spacing:-0.18px;color:#e9effc">DB1 - 1 (supply to DB5)</div>
<div class="lr" style="left:387px;top:615px;width:342px;background:#fff"></div>
<div class="ct" style="left:391px;top:618px;letter-spacing:-0.18px">DB1 - 2 (supply to DB6)</div>
<div class="lr" style="left:387px;top:635px;width:342px;background:#f4f4f4;border-top:1px solid #e9e9e9;border-bottom:1px solid #e9e9e9"></div>
<div class="ct" style="left:391px;top:638px;letter-spacing:-0.8px;word-spacing:1.7px">DB1 - 3</div>
<div class="lr" style="left:387px;top:655px;width:342px;background:#fff"></div>
<div class="ct" style="left:391px;top:658px;letter-spacing:-0.8px;word-spacing:1.7px">DB1 - 4</div>
<div class="lr" style="left:387px;top:675px;width:342px;background:#f4f4f4;border-top:1px solid #e9e9e9;border-bottom:1px solid #e9e9e9"></div>
<div class="ct" style="left:391px;top:678px;letter-spacing:-0.8px;word-spacing:1.7px">DB1 - 5</div>
<div class="lr" style="left:387px;top:695px;width:342px;background:#fff"></div>
<div class="ct" style="left:391px;top:698px;letter-spacing:-0.8px;word-spacing:1.7px">DB1 - 6</div>
<div class="lr" style="left:387px;top:715px;width:342px;background:#f4f4f4;border-top:1px solid #e9e9e9;border-bottom:1px solid #e9e9e9"></div>
<div class="ct" style="left:391px;top:718px;letter-spacing:-0.8px;word-spacing:1.7px">DB1 - 7</div>
<div class="lr" style="left:387px;top:735px;width:342px;background:#fff"></div>
<div class="ct" style="left:391px;top:738px;letter-spacing:-0.8px;word-spacing:1.7px">DB1 - 8</div>
<div class="lr" style="left:387px;top:755px;width:342px;background:#f4f4f4;border-top:1px solid #e9e9e9;border-bottom:1px solid #e9e9e9"></div>
<div class="ct" style="left:391px;top:758px;letter-spacing:-0.8px;word-spacing:1.7px">DB1 - 9</div>
<div class="a" style="left:386px;top:594px;width:343px;height:2px;background:#fff"></div>
<div class="a" style="left:386px;top:596px;width:2px;height:19px;background:#fff"></div>
<div class="a" style="left:729px;top:594px;width:19px;height:183px;background:#f2f2f3"></div>
<svg class="a" style="left:733px;top:601px" width="10" height="6" viewBox="0 0 10 6"><path d="M0.2 5.2 L9.4 5.2 L4.8 0.4 Z" fill="#4b4d70"/></svg>
<svg class="a" style="left:733px;top:765px" width="10" height="6" viewBox="0 0 10 6"><path d="M0.2 0.4 L9.4 0.4 L4.8 5.2 Z" fill="#4b4d70"/></svg>

<div class="thumb" style="left:730px;top:613px;height:116px"></div>
<div class="a" style="left:734px;top:667px;width:6px;height:7px;background:repeating-linear-gradient(#8c8c8c 0,#8c8c8c 1px,transparent 1px,transparent 2px)"></div>

<!-- OK -->
<div class="btn" style="left:668px;top:788px;width:81px;height:23px;line-height:21px;letter-spacing:-0.9px;background:linear-gradient(#f6f7f9 0,#e6e8ec 9px,#d3d7de 10px,#dfe2e8 17px,#eceef1 21px)">OK</div>
<div class="a" style="left:671px;top:791px;width:75px;height:17px;border:1px dotted #111"></div>
<!-- size grip -->
<svg class="a" style="left:743px;top:825px" width="12" height="12" viewBox="0 0 12 12" fill="#8a8a8a"><rect x="9" y="1" width="2" height="2"/><rect x="5" y="5" width="2" height="2"/><rect x="9" y="5" width="2" height="2"/><rect x="1" y="9" width="2" height="2"/><rect x="5" y="9" width="2" height="2"/><rect x="9" y="9" width="2" height="2"/></svg>

</body>
</html>
